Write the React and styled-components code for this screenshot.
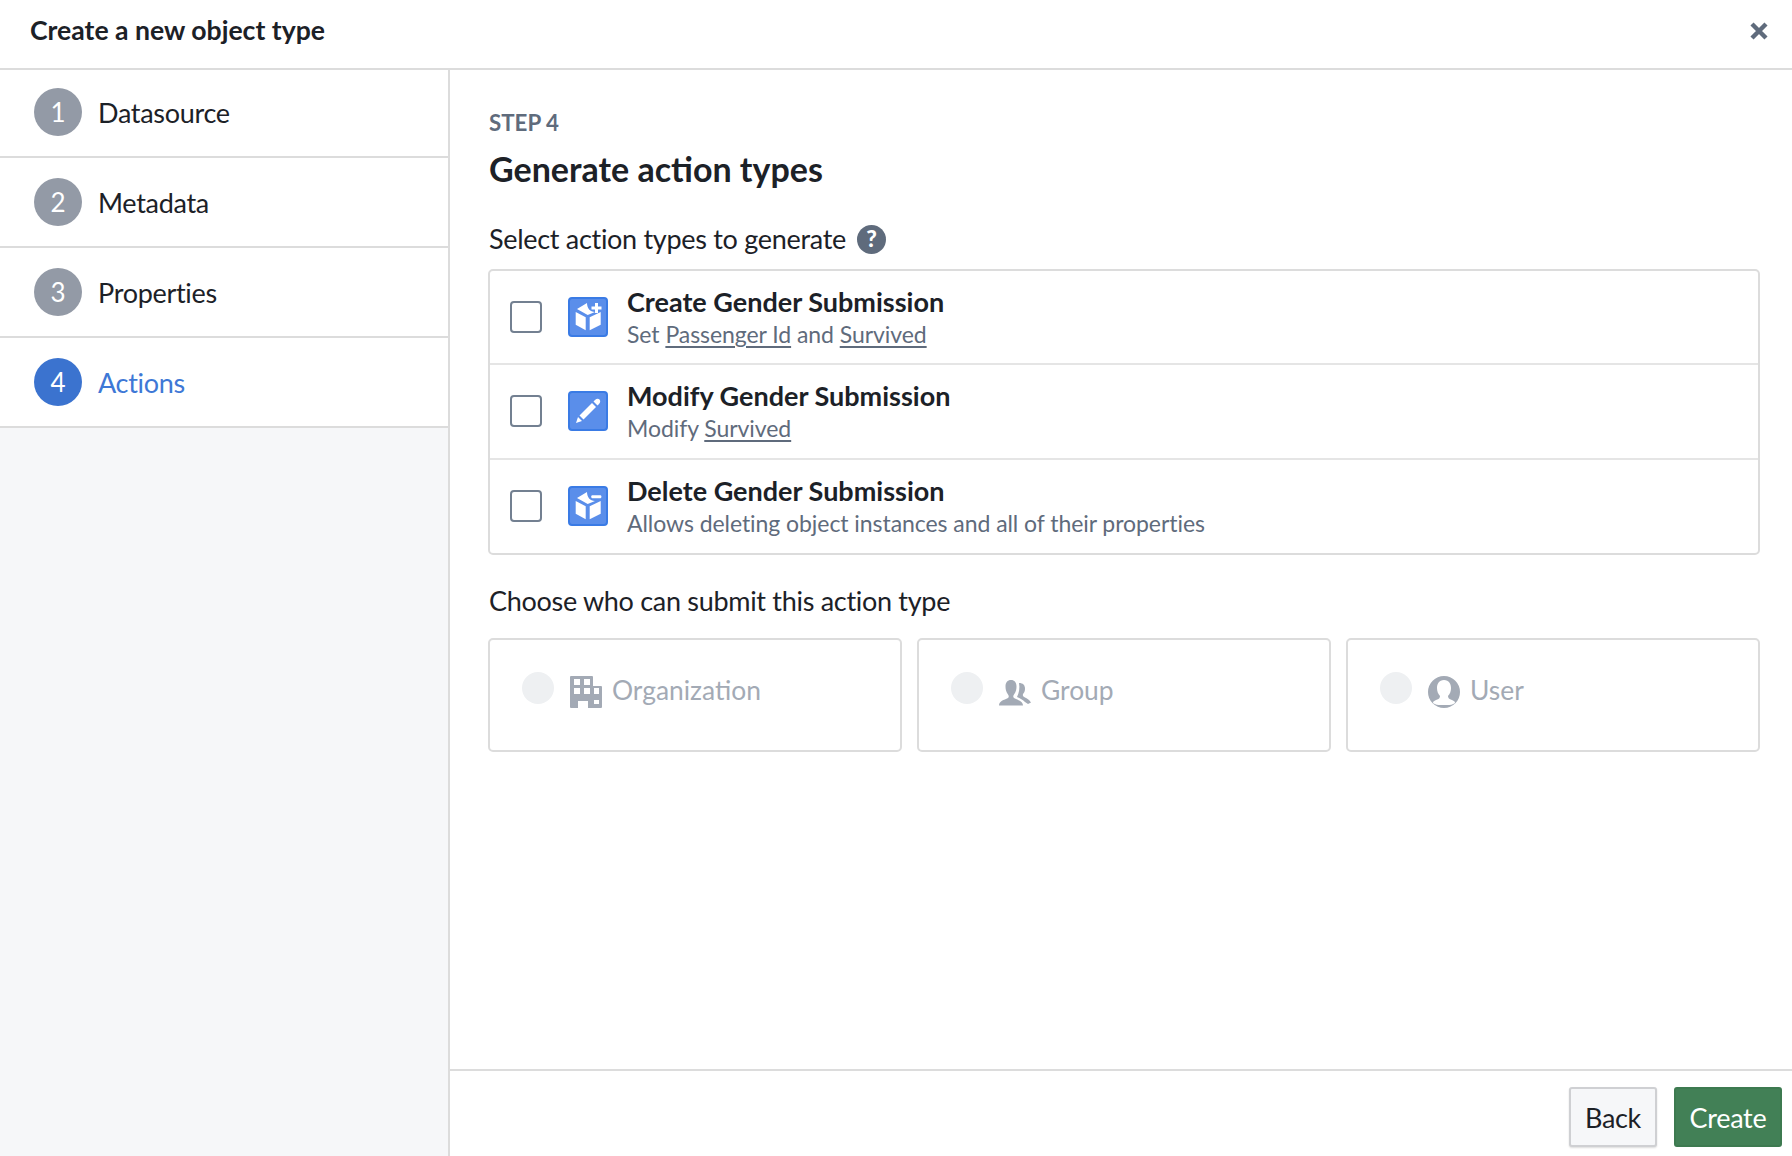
import React from "react";
import styled, { createGlobalStyle } from "styled-components";

const Global = createGlobalStyle`
  html, body { margin: 0; padding: 0; background: #fff; }
  body { font-family: "Lato", "Noto Sans", sans-serif; color: #1c2127; }
  * { box-sizing: border-box; }
`;

const Dialog = styled.div`
  width: 1792px; height: 1156px; display: flex; flex-direction: column; background: #fff; overflow: hidden;
`;
const Header = styled.header`
  height: 70px; flex: none; display: flex; align-items: center; justify-content: space-between;
  padding: 0 24px 8px 30px; border-bottom: 2px solid #dcdcdc;
`;
const Title = styled.h1`
  margin: 0; font-size: 26.6px; font-weight: 700; color: #1c2127;
`;
const Body = styled.div`
  flex: 1; display: flex; min-height: 0;
`;
const Sidebar = styled.nav`
  width: 450px; flex: none; background: #f6f7f9; border-right: 2px solid #dcdcdc;
`;
const Step = styled.div`
  height: 90px; display: flex; align-items: center; gap: 16px; padding: 0 0 0 34px;
  background: #fff; border-bottom: 2px solid #dcdcdc;
  font-size: 27px; letter-spacing: -0.3px; color: ${p => (p.$active ? "#3e78d6" : "#1c2127")};
  &:first-child { height: 88px; padding-bottom: 2px; }
`;
const Badge = styled.span`
  width: 48px; height: 48px; border-radius: 50%; display: flex; align-items: center; justify-content: center;
  background: ${p => (p.$active ? "#3b73cf" : "#939aa6")}; color: #fff; font-size: 26px; letter-spacing: 0;
`;
const Main = styled.main`
  flex: 1; display: flex; flex-direction: column; min-width: 0;
`;
const Content = styled.div`
  flex: 1; padding: 38px 32px 0 38px;
`;
const StepLabel = styled.div`
  font-size: 22.3px; font-weight: 700; color: #5f6b7c; line-height: 30px; padding-left: 1px;
`;
const Heading = styled.h2`
  margin: 9px 0 0; padding-left: 1px; font-size: 34px; font-weight: 700; line-height: 44px; color: #1c2127;
`;
const SectionLabel = styled.div`
  display: flex; align-items: center; gap: 11px; padding-left: 1px; font-size: 27px; letter-spacing: -0.3px;
  line-height: 36px; margin-top: ${p => p.$top}px;
`;
const List = styled.div`
  margin-top: 12px; border: 2px solid #dcdcdc; border-radius: 5px;
`;
const Row = styled.div`
  height: 95px; display: flex; align-items: center; padding: 0 20px;
  &:first-child { height: 92px; }
  & + & { border-top: 2px solid #e5e5e5; padding-bottom: 2px; }
`;
const Check = styled.span`
  width: 32px; height: 32px; border: 2px solid #738091; border-radius: 4px; flex: none;
`;
const IconBox = styled.span`
  width: 40px; height: 40px; margin-left: 26px; flex: none; background: #5a8eea; border: 2px solid #3a7be5;
  border-radius: 4px; display: flex; align-items: center; justify-content: center;
`;
const RowText = styled.div`
  margin-left: 19px; display: flex; flex-direction: column;
`;
const RowTitle = styled.div`
  font-size: 27px; font-weight: 700; line-height: 34px; color: #1c2127;
`;
const RowSub = styled.div`
  font-size: 23px; letter-spacing: -0.06px; line-height: 30px; color: #5f6b7c;
  u { text-underline-offset: 3px; }
`;
const Cards = styled.div`
  display: grid; grid-template-columns: repeat(3, 1fr); gap: 15px; margin-top: 19px;
`;
const Card = styled.div`
  height: 114px; border: 2px solid #dcdcdc; border-radius: 5px; display: flex; align-items: flex-start;
  padding: 32px 0 0 32px; color: #a3aab5; font-size: 26.4px;
`;
const Radio = styled.span`
  width: 32px; height: 32px; border-radius: 50%; background: #eef0f2; flex: none;
`;
const CardIcon = styled.svg`
  width: 32px; height: 32px; margin: 4px 10px 0 16px; flex: none; fill: #a3aab5;
`;
const CardText = styled.span`
  line-height: 36px;
`;
const Footer = styled.footer`
  height: 87px; flex: none; display: flex; justify-content: flex-end; align-items: flex-start; gap: 17px;
  padding: 16px 10px 0 0; border-top: 2px solid #dcdcdc;
`;
const Button = styled.button`
  height: 60px; width: ${p => (p.$primary ? 108 : 88)}px; padding: 0; font: inherit; font-size: 27px; letter-spacing: -0.3px;
  border-radius: 3px;
  color: ${p => (p.$primary ? "#fff" : "#1c2127")};
  background: ${p => (p.$primary ? "#428056" : "#f6f7f9")};
  border: 2px solid ${p => (p.$primary ? "#3d7a50" : "#cfd0d3")};
  box-shadow: ${p => (p.$primary ? "none" : "0 1px 2px rgba(0,0,0,.14)")};
`;
const CloseBtn = styled.svg`
  width: 18px; height: 18px; margin-top: 2px; stroke: #5f6b7c; stroke-width: 4.4; fill: none;
`;

const Cube = ({ sign }) => (
  <svg width="32" height="32" viewBox="0 0 32 32" fill="#fff">
    <path d="M15 2 L5 8 L15.700 14 L23 11 C18 11 15 7 15 2Z" />
    <path d="M3.700 11 L13.700 16.300 V29.300 L3.700 23.700Z" />
    <path d="M17.700 16.300 L28.700 11 V23.700 L17.700 29.300Z" />
    {sign === "plus" ? (
      <path d="M23 2 h3 v3.500 h3.500 v3 H26 v3.500 h-3 V8.500 h-3.500 v-3 H23Z" />
    ) : (
      <rect x="19.300" y="5.200" width="10" height="3" rx="1" />
    )}
  </svg>
);
const Pencil = () => (
  <svg width="32" height="32" viewBox="0 0 32 32" fill="#fff">
    <path d="M4 28 L6 22 L10 26Z" />
    <path d="M7.500 20.500 L20 8 L24 12 L11.500 24.500Z" />
    <path d="M21.500 6.500 L23 5 C24.500 3.500 26.500 3.500 27.500 4.500 S28.500 7.500 27 9 L25.500 10.500Z" />
  </svg>
);

const steps = ["Datasource", "Metadata", "Properties", "Actions"];

export default function App() {
  return (
    <Dialog>
      <Global />
      <Header>
        <Title>Create a new object type</Title>
        <CloseBtn viewBox="0 0 18 18"><path d="M2 2 L16 16 M16 2 L2 16" /></CloseBtn>
      </Header>
      <Body>
        <Sidebar>
          {steps.map((s, i) => (
            <Step key={s} $active={i === 3}>
              <Badge $active={i === 3}>{i + 1}</Badge>
              {s}
            </Step>
          ))}
        </Sidebar>
        <Main>
          <Content>
            <StepLabel>STEP 4</StepLabel>
            <Heading>Generate action types</Heading>
            <SectionLabel $top={30}>
              Select action types to generate
              <svg width="29" height="29" viewBox="0 0 28 28">
                <circle cx="14" cy="14" r="14" fill="#5f6b7c" />
                <text x="14" y="21.500" textAnchor="middle" fill="#fff" fontSize="22" fontWeight="900" fontFamily="Lato">?</text>
              </svg>
            </SectionLabel>
            <List>
              <Row>
                <Check /><IconBox><Cube sign="plus" /></IconBox>
                <RowText>
                  <RowTitle>Create Gender Submission</RowTitle>
                  <RowSub>Set <u>Passenger Id</u> and <u>Survived</u></RowSub>
                </RowText>
              </Row>
              <Row>
                <Check /><IconBox><Pencil /></IconBox>
                <RowText>
                  <RowTitle>Modify Gender Submission</RowTitle>
                  <RowSub>Modify <u>Survived</u></RowSub>
                </RowText>
              </Row>
              <Row>
                <Check /><IconBox><Cube sign="minus" /></IconBox>
                <RowText>
                  <RowTitle>Delete Gender Submission</RowTitle>
                  <RowSub>Allows deleting object instances and all of their properties</RowSub>
                </RowText>
              </Row>
            </List>
            <SectionLabel $top={28}>Choose who can submit this action type</SectionLabel>
            <Cards>
              <Card>
                <Radio />
                <CardIcon viewBox="0 0 32 32"><path fillRule="evenodd" d="M1 0 H22 Q23 0 23 1 V10 H31 Q32 10 32 11 V31 Q32 32 31 32 H18 V25 H8 V32 H1 Q0 32 0 31 V1 Q0 0 1 0Z M4 3 V9 H10 V3Z M14 3 V9 H20 V3Z M4 12 V18 H10 V12Z M14 12 V18 H20 V12Z M24 12 V18 H29 V12Z M24 24 V28 H29 V24Z" /></CardIcon>
                <CardText>Organization</CardText>
              </Card>
              <Card>
                <Radio />
                <CardIcon viewBox="0 0 32 32"><path d="M0 29.500 C0 25 5 24 9 22 C10 21 10 20 9 18.500 C7 16 6.500 13 6.500 10.500 C6.500 6.500 8.500 4 12 4 S17.500 6.500 17.500 10.500 C17.500 13 17 16 15 18.500 C14 20 14 21 15 22 C19 24 24 25 24 29.500Z" /><path d="M20 7 C24 7 26 9 26 13 C26 15 25 17 24 18 C23.500 19.500 24 20.500 26 21.500 C28 22.500 30 23.500 32 26.500 L29 28 L26 26 C24 24 21 22 18 21 C20 17 21 12 20 7Z" /></CardIcon>
                <CardText>Group</CardText>
              </Card>
              <Card>
                <Radio />
                <CardIcon viewBox="0 0 32 32"><path fillRule="evenodd" d="M16 0 A16 16 0 1 0 16 32 A16 16 0 1 0 16 0Z M16 4 C21 4 23 8 23 12 C23 15 22 18 20 20 C20 22 21 23 24 24 C26 25 27 25.500 27 27 C24 29.500 19.500 29 16 29 S8 29.500 5 27 C5 25.500 6 25 8 24 C11 23 12 22 12 20 C10 18 9 15 9 12 C9 8 11 4 16 4Z" /></CardIcon>
                <CardText>User</CardText>
              </Card>
            </Cards>
          </Content>
          <Footer>
            <Button>Back</Button>
            <Button $primary>Create</Button>
          </Footer>
        </Main>
      </Body>
    </Dialog>
  );
}
